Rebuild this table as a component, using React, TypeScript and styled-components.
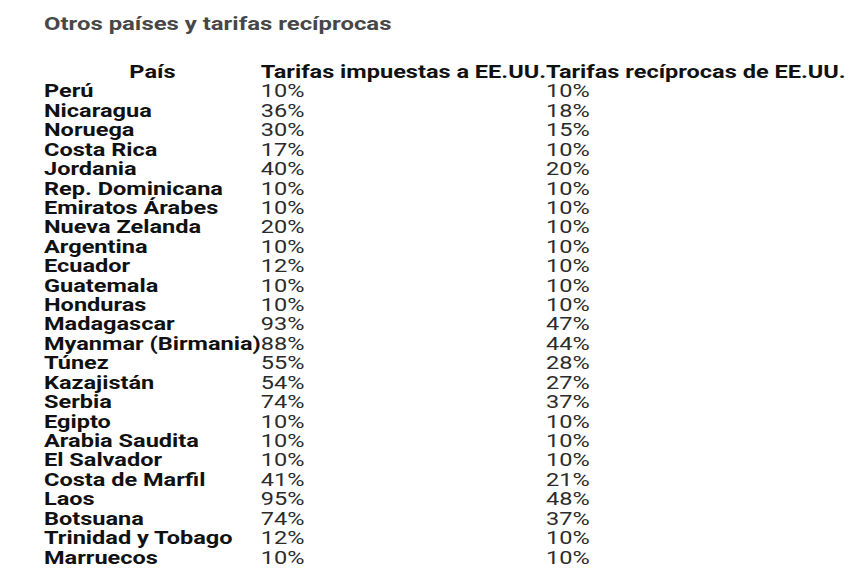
import React from "react"
import styled, { createGlobalStyle } from "styled-components"

const GlobalStyle = createGlobalStyle`
  body {
    margin: 0;
    background: #fff;
    font-family: Roboto, "Liberation Sans", sans-serif;
    overflow: hidden;
  }
`

const Page = styled.div`
  padding: 12px 0 0 44px;
`

// the screenshot is stretched sideways, so the sheet is widened
const Sheet = styled.div`
  width: max-content;
  transform: scaleX(1.272);
  transform-origin: 0 0;
`

const Title = styled.h2`
  margin: 0 0 27px;
  font-size: 18.8px;
  font-weight: 700;
  line-height: 24px;
  color: #474747;
`

const Table = styled.table`
  border-collapse: collapse;
  border-spacing: 0;
  font-size: 18.5px;
  line-height: 19.42px;
`

const Head = styled.th`
  padding: 0;
  font-weight: 700;
  color: #111;
  text-align: center;
  white-space: nowrap;
`

const Cell = styled.td<{ $name?: boolean }>`
  padding: 0;
  white-space: nowrap;
  font-weight: ${(p) => (p.$name ? 700 : 400)};
  color: ${(p) => (p.$name ? "#111" : "#2b2b2b")};
`

const rows: [string, string, string][] = [
  ["Perú", "10%", "10%"],
  ["Nicaragua", "36%", "18%"],
  ["Noruega", "30%", "15%"],
  ["Costa Rica", "17%", "10%"],
  ["Jordania", "40%", "20%"],
  ["Rep. Dominicana", "10%", "10%"],
  ["Emiratos Árabes", "10%", "10%"],
  ["Nueva Zelanda", "20%", "10%"],
  ["Argentina", "10%", "10%"],
  ["Ecuador", "12%", "10%"],
  ["Guatemala", "10%", "10%"],
  ["Honduras", "10%", "10%"],
  ["Madagascar", "93%", "47%"],
  ["Myanmar (Birmania)", "88%", "44%"],
  ["Túnez", "55%", "28%"],
  ["Kazajistán", "54%", "27%"],
  ["Serbia", "74%", "37%"],
  ["Egipto", "10%", "10%"],
  ["Arabia Saudita", "10%", "10%"],
  ["El Salvador", "10%", "10%"],
  ["Costa de Marfil", "41%", "21%"],
  ["Laos", "95%", "48%"],
  ["Botsuana", "74%", "37%"],
  ["Trinidad y Tobago", "12%", "10%"],
  ["Marruecos", "10%", "10%"],
]

export default function App() {
  return (
    <>
      <GlobalStyle />
      <Page>
        <Sheet>
          <Title>Otros países y tarifas recíprocas</Title>
          <Table>
            <thead>
              <tr>
                <Head>País</Head>
                <Head>Tarifas impuestas a EE.UU.</Head>
                <Head>Tarifas recíprocas de EE.UU.</Head>
              </tr>
            </thead>
            <tbody>
              {rows.map(([name, a, b]) => (
                <tr key={name}>
                  <Cell $name>{name}</Cell>
                  <Cell>{a}</Cell>
                  <Cell>{b}</Cell>
                </tr>
              ))}
            </tbody>
          </Table>
        </Sheet>
      </Page>
    </>
  )
}
